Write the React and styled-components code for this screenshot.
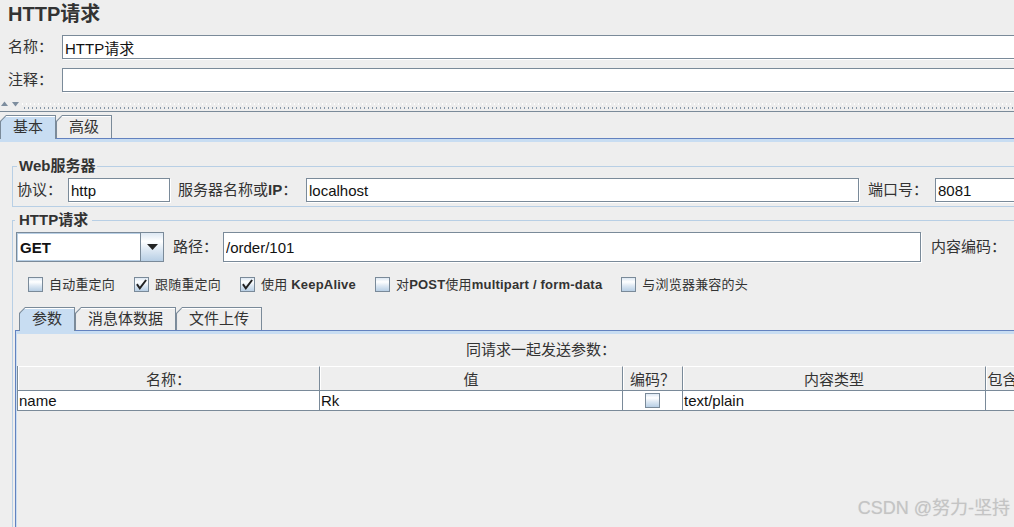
import React from "react";
import styled, { createGlobalStyle } from "styled-components";

const FONT = `"Liberation Sans", "Noto Sans CJK SC", sans-serif`;

const GlobalStyle = createGlobalStyle`
  html, body { margin: 0; padding: 0; overflow: hidden; background: #eeeeee; }
  body { font-family: ${FONT}; color: #333; }
  *, *::before, *::after { box-sizing: border-box; }
`;

const Viewport = styled.div`
  position: relative;
  width: 1014px;
  height: 527px;
  overflow: hidden;
  background: #eeeeee;
`;

const Page = styled.div`
  width: 1066px;
  height: 560px;
  display: flex;
  flex-direction: column;
`;

const Title = styled.h1`
  margin: 0 0 7px 0;
  padding-left: 8px;
  height: 28px;
  font: bold 20px/28px ${FONT};
  color: #333;
`;

const FormRow = styled.div`
  display: flex;
  align-items: center;
  height: 24px;
  padding-left: 8px;
  flex: none;
  & + & { margin-top: 9px; }
`;

const FieldLabel = styled.span`
  flex: none;
  width: ${(p) => p.$w}px;
  margin-left: ${(p) => p.$ml || 0}px;
  font: 15px/18px ${FONT};
  color: #333;
  white-space: nowrap;
`;

const Strong = styled.b`
  font-weight: bold;
`;

const TextField = styled.input`
  flex: ${(p) => (p.$w ? "none" : "1")};
  width: ${(p) => (p.$w ? `${p.$w}px` : "auto")};
  min-width: 0;
  height: ${(p) => p.$h || 24}px;
  margin: 0;
  padding: 0 2px;
  border: 1px solid #7a8a99;
  background: #fff;
  box-shadow: 1px 1px 0 #fff;
  font: 15px ${FONT};
  color: #111;
  outline: none;
`;

const Splitter = styled.div`
  flex: none;
  display: flex;
  height: 20px;
  border-bottom: 1px solid #7a8a99;
`;

const SplitArrows = styled.svg`
  flex: none;
  width: 22px;
  height: 8px;
  margin-top: 8px;
`;

const Bumps = styled.div`
  flex: 1;
  background-image: linear-gradient(90deg, #ffffff 0 1px, transparent 1px),
    linear-gradient(90deg, #8797a8 0 1px, transparent 1px);
  background-size: 4px 2px, 4px 2px;
  background-position: 0 11px, 2px 15px;
  background-repeat: repeat-x;
`;

const TabStrip = styled.div`
  flex: none;
  display: flex;
  align-items: flex-end;
  height: 23px;
  margin-top: ${(p) => p.$mt || 0}px;
  padding-left: ${(p) => p.$pl || 0}px;
`;

const TabShell = styled.div`
  position: relative;
  z-index: ${(p) => (p.$selected ? 1 : 0)};
  height: ${(p) => (p.$selected ? 24 : 23)}px;
  margin-bottom: ${(p) => (p.$selected ? -1 : 0)}px;
  padding: 1px 1px 0 1px;
  background: #7a8a99;
  clip-path: polygon(6px 0, 100% 0, 100% 100%, 0 100%, 0 6px);
`;

const TabFace = styled.div`
  height: 100%;
  padding: 0 12px ${(p) => (p.$selected ? 1 : 0)}px 12px;
  display: flex;
  align-items: center;
  background: ${(p) => (p.$selected ? "#c8ddf2" : "#eeeeee")};
  box-shadow: inset 0 1px 0 #ffffff;
  clip-path: polygon(5.4px 0, 100% 0, 100% 100%, 0 100%, 0 5.4px);
  font: 15px/18px ${FONT};
  color: #333;
  white-space: nowrap;
`;

const TabBand = styled.div`
  flex: none;
  height: 4px;
  border-top: 1px solid #6382bf;
  background: #c8ddf2;
`;

const Content = styled.div`
  flex: 1;
  display: flex;
  flex-direction: column;
  padding-left: 12px;
  min-height: 0;
`;

const Group = styled.fieldset`
  margin: ${(p) => p.$mt}px 0 0 0;
  border: 1px solid #b8cfe5;
  padding: 3px 0 ${(p) => p.$pb}px ${(p) => p.$pl}px;
  min-width: 0;
  flex: ${(p) => (p.$grow ? "1" : "none")};
  display: flex;
  flex-direction: column;
`;

const Legend = styled.legend`
  padding: 0 ${(p) => p.$px}px;
  font: bold 15px/18px ${FONT};
  color: #333;
  white-space: nowrap;
`;

const FieldLine = styled.div`
  flex: none;
  display: flex;
  align-items: center;
  height: ${(p) => p.$h}px;
  padding-left: ${(p) => p.$pl || 0}px;
`;

const Combo = styled.div`
  flex: none;
  display: flex;
  width: 148px;
  height: 30px;
  border: 1px solid #7a8a99;
  background: #fff;
`;

const ComboValue = styled.div`
  flex: 1;
  display: flex;
  align-items: center;
  padding-left: 2px;
  border: 1px solid #b8cfe5;
  border-right: none;
  font: bold 15px ${FONT};
  color: #111;
`;

const gradient = `linear-gradient(180deg, #dde8f3 0%, #ffffff 30%, #dde8f3 60%, #b8cfe5 100%)`;

const ComboButton = styled.div`
  flex: none;
  width: 23px;
  display: flex;
  align-items: center;
  justify-content: center;
  border-left: 1px solid #7a8a99;
  background: ${gradient};
`;

const CheckRow = styled.div`
  flex: none;
  display: flex;
  align-items: center;
  gap: 19px;
  height: 15px;
  margin-top: 15px;
  padding-left: 13px;
`;

const CheckItem = styled.label`
  display: flex;
  align-items: center;
  gap: 6px;
  color: #333;
  white-space: nowrap;
`;

const CheckText = styled.span`
  font: 13px/15px ${FONT};
  letter-spacing: 0.2px;
`;

const Box = styled.span`
  flex: none;
  width: 15px;
  height: 15px;
  display: inline-flex;
  border: 1px solid #7a8a99;
  background: ${gradient};
`;

const InnerTabs = styled.div`
  flex: 1;
  display: flex;
  flex-direction: column;
  margin-top: 15px;
`;

const InnerPanel = styled.div`
  flex: 1;
  display: flex;
  flex-direction: column;
  border-top: 1px solid #6382bf;
  border-left: 1px solid #6382bf;
  box-shadow: inset 1px 3px 0 #c8ddf2;
  padding: 3px 0 0 1px;
`;

const Caption = styled.div`
  flex: none;
  height: 32px;
  line-height: 32px;
  text-align: center;
  font-size: 15px;
  color: #333;
`;

const Table = styled.div`
  flex: none;
  border-left: 1px solid #7a8a99;
`;

const GridRow = styled.div`
  display: grid;
  grid-template-columns: 302px 303px 60px 303px 79px;
`;

const HeadCell = styled.div`
  height: 25px;
  display: flex;
  align-items: center;
  justify-content: center;
  border-top: 1px solid #ffffff;
  border-right: 1px solid #7a8a99;
  border-bottom: 1px solid #7a8a99;
  box-shadow: inset 1px 0 0 #ffffff;
  background: #eeeeee;
  font: 15px ${FONT};
  color: #333;
  white-space: nowrap;
  overflow: hidden;
`;

const BodyCell = styled.div`
  height: 20px;
  display: flex;
  align-items: center;
  justify-content: ${(p) => (p.$center ? "center" : "flex-start")};
  padding-left: ${(p) => (p.$center ? 0 : 1)}px;
  background: #ffffff;
  border-right: 1px solid #7a8a99;
  border-bottom: 1px solid #7a8a99;
  font: 15px ${FONT};
  color: #111;
  white-space: nowrap;
  overflow: hidden;
`;

const Watermark = styled.div`
  position: absolute;
  top: 497px;
  right: 4px;
  font: 18px/22px ${FONT};
  color: #c4c4c4;
  text-shadow: 0 0 1px #d8d8d8;
  white-space: nowrap;
`;

function Tab({ selected, children }) {
  return (
    <TabShell $selected={selected}>
      <TabFace $selected={selected}>{children}</TabFace>
    </TabShell>
  );
}

function CheckBox({ checked }) {
  return (
    <Box>
      {checked && (
        <svg width="13" height="13" viewBox="0 0 13 13">
          <polyline
            points="2.5,7 4.8,10.3 10.5,2.8"
            fill="none"
            stroke="#222"
            strokeWidth="2"
            strokeLinecap="square"
          />
        </svg>
      )}
    </Box>
  );
}

function Check({ checked, children }) {
  return (
    <CheckItem>
      <CheckBox checked={checked} />
      <CheckText>{children}</CheckText>
    </CheckItem>
  );
}

export default function App() {
  return (
    <Viewport>
      <GlobalStyle />
      <Page>
        <Title>HTTP请求</Title>
        <FormRow>
          <FieldLabel $w={54}>名称：</FieldLabel>
          <TextField readOnly value="HTTP请求" />
        </FormRow>
        <FormRow>
          <FieldLabel $w={54}>注释：</FieldLabel>
          <TextField readOnly value="" />
        </FormRow>

        <Splitter>
          <SplitArrows viewBox="0 0 22 8">
            <polygon points="1,6 4.5,1.5 8,6" fill="#7d8d9e" />
            <polygon points="12,2 15.5,6.5 19,2" fill="#7d8d9e" />
          </SplitArrows>
          <Bumps />
        </Splitter>

        <TabStrip $mt={3}>
          <Tab selected>基本</Tab>
          <Tab>高级</Tab>
        </TabStrip>
        <TabBand />

        <Content>
          <Group $mt={15} $pb={4} $pl={4}>
            <Legend $px={2}>Web服务器</Legend>
            <FieldLine $h={24}>
              <FieldLabel $w={51}>协议：</FieldLabel>
              <TextField $w={102} readOnly value="http" />
              <FieldLabel $w={128} $ml={8}>
                服务器名称或<Strong>IP</Strong>：
              </FieldLabel>
              <TextField $w={553} readOnly value="localhost" />
              <FieldLabel $w={67} $ml={9}>端口号：</FieldLabel>
              <TextField $w={120} readOnly value="8081" />
            </FieldLine>
          </Group>

          <Group $mt={4} $pb={0} $pl={2} $grow>
            <Legend $px={4}>HTTP请求</Legend>
            <FieldLine $h={30} $pl={1}>
              <Combo>
                <ComboValue>GET</ComboValue>
                <ComboButton>
                  <svg width="11" height="6" viewBox="0 0 11 6">
                    <polygon points="0,0 11,0 5.5,6" fill="#222" />
                  </svg>
                </ComboButton>
              </Combo>
              <FieldLabel $w={50} $ml={9}>路径：</FieldLabel>
              <TextField $w={698} $h={30} readOnly value="/order/101" />
              <FieldLabel $w={83} $ml={10}>内容编码：</FieldLabel>
              <TextField $w={100} $h={30} readOnly value="" />
            </FieldLine>

            <CheckRow>
              <Check>自动重定向</Check>
              <Check checked>跟随重定向</Check>
              <Check checked>
                使用 <Strong>KeepAlive</Strong>
              </Check>
              <Check>
                对<Strong>POST</Strong>使用<Strong>multipart / form-data</Strong>
              </Check>
              <Check>与浏览器兼容的头</Check>
            </CheckRow>

            <InnerTabs>
              <TabStrip $pl={4}>
                <Tab selected>参数</Tab>
                <Tab>消息体数据</Tab>
                <Tab>文件上传</Tab>
              </TabStrip>
              <InnerPanel>
                <Caption>同请求一起发送参数：</Caption>
                <Table>
                  <GridRow>
                    <HeadCell>名称：</HeadCell>
                    <HeadCell>值</HeadCell>
                    <HeadCell>编码？</HeadCell>
                    <HeadCell>内容类型</HeadCell>
                    <HeadCell>包含等于？</HeadCell>
                  </GridRow>
                  <GridRow>
                    <BodyCell>name</BodyCell>
                    <BodyCell>Rk</BodyCell>
                    <BodyCell $center>
                      <CheckBox />
                    </BodyCell>
                    <BodyCell>text/plain</BodyCell>
                    <BodyCell $center>
                      <CheckBox checked />
                    </BodyCell>
                  </GridRow>
                </Table>
              </InnerPanel>
            </InnerTabs>
          </Group>
        </Content>
      </Page>
      <Watermark>CSDN @努力-坚持</Watermark>
    </Viewport>
  );
}
